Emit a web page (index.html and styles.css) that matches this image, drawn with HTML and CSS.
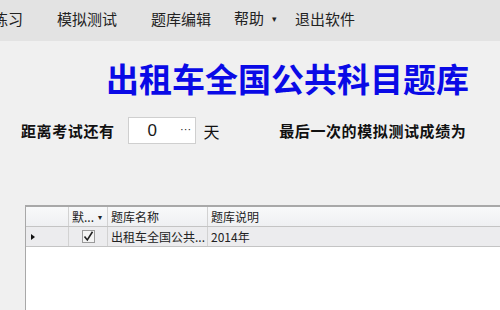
FILE: index.html
```html
<!DOCTYPE html>
<html lang="zh">
<head>
<meta charset="utf-8">
<link rel="stylesheet" href="styles.css">
</head>
<body>
<div class="menubar">
  <span class="menu-item m1">练习</span>
  <span class="menu-item m2">模拟测试</span>
  <span class="menu-item m3">题库编辑</span>
  <span class="menu-item m4">帮助<span class="caret">▾</span></span>
  <span class="menu-item m5">退出软件</span>
</div>
<h1 class="title">出租车全国公共科目题库</h1>
<div class="info">
  <span class="label">距离考试还有</span>
  <span class="spin"><span class="spin-val">0</span><span class="spin-dots">···</span></span>
  <span class="label day">天</span>
  <span class="label last">最后一次的模拟测试成绩为</span>
</div>
<div class="grid">
  <div class="grow ghead">
    <div class="cell c0"></div>
    <div class="cell c1">默...<span class="sort">▾</span></div>
    <div class="cell c2">题库名称</div>
    <div class="cell c3">题库说明</div>
  </div>
  <div class="grow gdata">
    <div class="cell c0"><span class="tri"></span></div>
    <div class="cell c1 center">
      <svg width="13" height="13" viewBox="0 0 13 13"><rect x="0.5" y="0.5" width="12" height="12" fill="#f4f4f4" stroke="#9a9a9a"/><path d="M2.5 6.5 L5.3 10 L10.5 1.8" fill="none" stroke="#222" stroke-width="1.6"/></svg>
    </div>
    <div class="cell c2">出租车全国公共...</div>
    <div class="cell c3">2014年</div>
  </div>
</div>
</body>
</html>
```
FILE: styles.css
```css
html, body {
  margin: 0;
  padding: 0;
  background: #f0f0f0;
  font-family: "Noto Sans CJK SC", "Noto Sans", sans-serif;
  color: #1a1a1a;
  overflow: hidden;
  width: 500px;
  height: 310px;
}
.menubar {
  height: 41px;
  background: #e3e3e3;
  display: flex;
  align-items: center;
  font-size: 15px;
  color: #222;
  white-space: nowrap;
}
.menu-item { line-height: 20px; padding-bottom: 4px; }
.m1 { margin-left: -7px; }
.m2 { margin-left: 34px; }
.m3 { margin-left: 34px; }
.m4 { margin-left: 23px; }
.m5 { margin-left: 18px; }
.caret { font-size: 9px; margin-left: 8px; vertical-align: 2px; }
.title {
  margin: 17px 0 0 0;
  padding-right: 31px;
  text-align: right;
  font-size: 33px;
  line-height: 40px;
  font-weight: 700;
  color: #0a0ae6;
  letter-spacing: 0;
}
.info {
  display: flex;
  align-items: center;
  margin-top: 19px;
  padding-left: 21px;
  height: 27px;
}
.label {
  font-size: 15px;
  font-weight: 700;
  letter-spacing: 0.6px;
  color: #111;
}
.spin {
  margin-left: 13px;
  width: 68px;
  height: 27px;
  box-sizing: border-box;
  background: #fff;
  border: 1px solid #cfcfcf;
  display: flex;
  align-items: center;
  font-family: "Liberation Sans", sans-serif;
  font-size: 17px;
}
.spin-val { margin-left: 19px; }
.spin-dots { margin-left: 23px; font-size: 11px; position: relative; top: -2px; }
.day { margin-left: 8px; font-weight: 400; font-size: 16px; }
.last { margin-left: 59px; }
.grid {
  margin-top: 61px;
  margin-left: 25px;
  width: 490px;
  height: 105px;
  box-sizing: border-box;
  background: #fff;
  border-left: 1px solid #a8a8a8;
  border-top: 2px solid #a8a8a8;
  font-size: 12px;
  color: #222;
}
.grow {
  display: flex;
  height: 19px;
  border-bottom: 1px solid #c4c4c4;
}
.ghead { background: linear-gradient(#f8f9fa, #eff0f2); }
.gdata { background: #ececee; }
.cell {
  box-sizing: border-box;
  border-right: 1px solid #d2d2d2;
  display: flex;
  align-items: center;
  padding-left: 3px;
  white-space: nowrap;
  overflow: hidden;
}
.c0 { width: 43px; }
.c1 { width: 39px; }
.c2 { width: 100px; }
.c3 { flex: 1; border-right: none; }
.center { justify-content: center; padding-left: 0; }
.sort { font-size: 8px; margin-left: 4px; }
.tri {
  width: 0;
  height: 0;
  border-top: 3.5px solid transparent;
  border-bottom: 3.5px solid transparent;
  border-left: 4px solid #111;
  margin-left: 2px;
}
```
